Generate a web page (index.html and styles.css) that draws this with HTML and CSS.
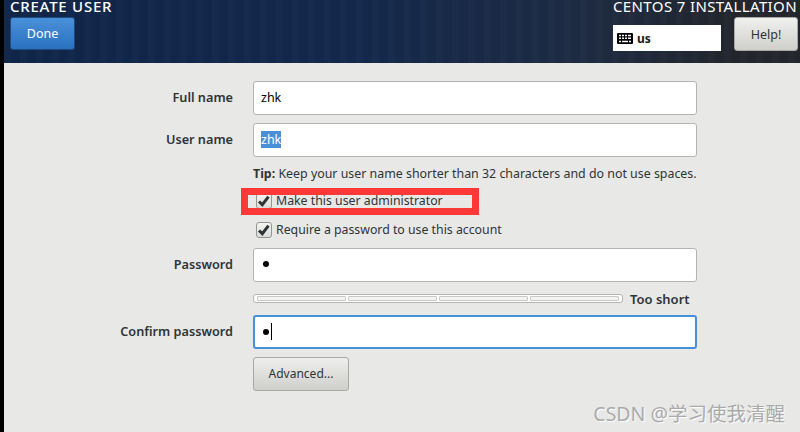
FILE: index.html
```html
<!DOCTYPE html>
<html lang="en">
<head>
<meta charset="utf-8">
<title>Create User</title>
<link rel="stylesheet" href="styles.css">
</head>
<body>
<div class="window">
  <header class="topbar">
    <div class="topbar-left">
      <h1 class="title">CREATE USER</h1>
      <button class="btn btn-done">Done</button>
    </div>
    <div class="topbar-right">
      <div class="product">CENTOS 7 INSTALLATION</div>
      <div class="topbar-tools">
        <div class="layout">
          <svg class="kbd" viewBox="0 0 16 12" width="16" height="11" preserveAspectRatio="none"><path fill="#000" fill-rule="evenodd" d="M1 0h14a1 1 0 0 1 1 1v10a1 1 0 0 1-1 1H1a1 1 0 0 1-1-1V1a1 1 0 0 1 1-1zM2 2v1.500h2V2zM5 2v1.500h2V2zM8 2v1.500h2V2zM11 2v1.500h3V2zM2 5v1.500h2V5zM5 5v1.500h2V5zM8 5v1.500h2V5zM11 5v1.500h3V5zM2 8.500V10h2V8.500zM5 8.500V10h6V8.500zM12 8.500V10h2V8.500z"/></svg>
          <span class="layout-name">us</span>
        </div>
        <button class="btn btn-help">Help!</button>
      </div>
    </div>
  </header>
  <main class="form">
    <label class="label">Full name</label>
    <div class="entry">zhk</div>
    <label class="label">User name</label>
    <div class="entry"><span class="selected">zhk</span></div>
    <div></div>
    <div class="tip"><b>Tip:</b> Keep your user name shorter than 32 characters and do not use spaces.</div>
    <div></div>
    <div class="check check-admin"><span class="box"><svg viewBox="0 0 14 14" width="14" height="14"><path d="M2 7.500l3.300 3.200 6.200-8" fill="none" stroke="#2e3436" stroke-width="3"/></svg></span>Make this user administrator</div>
    <div></div>
    <div class="check check-pass"><span class="box"><svg viewBox="0 0 14 14" width="14" height="14"><path d="M2 7.500l3.300 3.200 6.200-8" fill="none" stroke="#2e3436" stroke-width="3"/></svg></span>Require a password to use this account</div>
    <label class="label">Password</label>
    <div class="entry entry-pass"><span class="dot"></span></div>
    <div></div>
    <div class="strength">
      <div class="meter"><i></i><i></i><i></i><i></i></div>
      <span class="strength-text">Too short</span>
    </div>
    <label class="label">Confirm password</label>
    <div class="entry entry-focus entry-pass"><span class="dot"></span><span class="caret"></span></div>
    <div></div>
    <div><button class="btn btn-adv">Advanced...</button></div>
  </main>
  <div class="redbox"></div>
  <div class="watermark">CSDN @学习使我清醒</div>
</div>
</body>
</html>
```
FILE: styles.css
```css
* { box-sizing: border-box; }
html, body { margin: 0; padding: 0; }
body {
  width: 800px;
  height: 432px;
  overflow: hidden;
  background: #000;
  font-family: "Noto Sans", "Open Sans", "Noto Sans CJK SC", sans-serif;
  color: #2e3436;
}
.window {
  position: relative;
  margin-left: 4px;
  width: 796px;
  height: 432px;
  background: #e8e8e7;
}
.topbar {
  height: 63px;
  display: flex;
  justify-content: space-between;
  padding: 0 2px 0 6px;
  background:
    repeating-linear-gradient(90deg, rgba(255,255,255,.012) 0 7px, rgba(0,0,0,.03) 7px 16px),
    linear-gradient(90deg, #10264a 0%, #14294c 45%, #1e2c44 72%, #23262d 92%, #23262d 100%);
}
.title {
  margin: 0 0 4px;
  height: 13px;
  line-height: 13px;
  font-size: 15px;
  letter-spacing: .75px;
  font-weight: 500;
  white-space: nowrap;
  color: #fff;
}
.btn {
  display: block;
  font-family: inherit;
  font-size: 12.500px;
  border-radius: 3px;
  padding: 0;
}
.btn-done {
  width: 65px;
  height: 33px;
  color: #fff;
  border: 1px solid #1c4a80;
  background: linear-gradient(#4a90d9, #2a71c0);
}
.topbar-right { width: 185px; }
.product {
  margin: 0;
  height: 17px;
  line-height: 13px;
  font-size: 15px;
  letter-spacing: .38px;
  color: #fff;
  white-space: nowrap;
}
.topbar-tools {
  display: flex;
  align-items: flex-start;
}
.layout {
  margin-top: 8px;
  width: 108px;
  height: 26px;
  flex: none;
  background: #fff;
  display: flex;
  align-items: center;
  padding-left: 4px;
  gap: 4px;
}
.layout-name { font-size: 12px; font-weight: 700; color: #1a1a1a; }
.btn-help {
  width: 64px;
  height: 34px;
  margin-left: 13px;
  flex: none;
  color: #2e3436;
  border: 1px solid #a8a8a5;
  background: linear-gradient(#f0f0ee, #cfcfcc);
}
.form {
  display: grid;
  grid-template-columns: 229px 444px;
  column-gap: 20px;
  row-gap: 8px;
  align-items: center;
  justify-content: start;
  padding-top: 18px;
}
.label {
  text-align: right;
  font-size: 12.700px;
  font-weight: 600;
  padding-bottom: 2px;
  color: #2e3436;
}
.entry {
  height: 34px;
  background: #fff;
  border: 1px solid #b3b3b0;
  border-radius: 3px;
  padding: 0 7px 2px;
  display: flex;
  align-items: center;
  font-size: 12.500px;
  color: #000;
}
.selected { background: #4a90d9; color: #fff; }
.tip { font-size: 12.400px; height: 17px; line-height: 17px; white-space: nowrap; }
.check { display: flex; align-items: center; gap: 4px; font-size: 12.300px; margin-left: 3px; height: 17px; white-space: nowrap; }
.check-admin { margin-top: 2px; }
.check-pass { margin-top: 4px; margin-bottom: 2px; }
.box {
  width: 16px;
  height: 16px;
  border: 1px solid #949491;
  border-radius: 3px;
  background: linear-gradient(#f4f4f2, #dcdcda);
  display: flex;
  align-items: center;
  justify-content: center;
}
.entry-pass { padding-left: 9px; }
.dot { width: 6px; height: 6px; border-radius: 50%; background: #000; }
.caret { width: 1px; height: 17px; background: #000; margin-left: 2px; }
.entry-focus { border: 2px solid #4a90d9; padding-left: 8px; padding-bottom: 1px; }
.strength {
  grid-column: 2;
  display: flex;
  align-items: center;
  gap: 7px;
  margin-top: 4px;
  margin-bottom: 4px;
  height: 9px;
  width: 470px;
}
.meter {
  width: 370px;
  height: 9px;
  flex: none;
  border: 1px solid #b3b3b0;
  border-radius: 3px;
  background: #fff;
  padding: 1px 3px;
  display: flex;
  gap: 2px;
}
.meter i { flex: 1; border: 1px solid #c8c8c6; border-radius: 1px; background: #f4f4f3; }
.strength-text { font-size: 13px; font-weight: 600; white-space: nowrap; }
.btn-adv {
  width: 96px;
  height: 34px;
  font-size: 12px;
  padding-bottom: 2px;
  color: #2e3436;
  border: 1px solid #a8a8a5;
  background: linear-gradient(#eeeeec, #cfcfcc);
}
.redbox {
  position: absolute;
  left: 237px;
  top: 188px;
  width: 238px;
  height: 27px;
  border: 7px solid #ff3838;
}
.watermark {
  position: absolute;
  right: 15px;
  top: 398px;
  font-size: 19.500px;
  color: #aaa;
  text-shadow: 1px 1px 1px #fff;
  white-space: nowrap;
}
```
